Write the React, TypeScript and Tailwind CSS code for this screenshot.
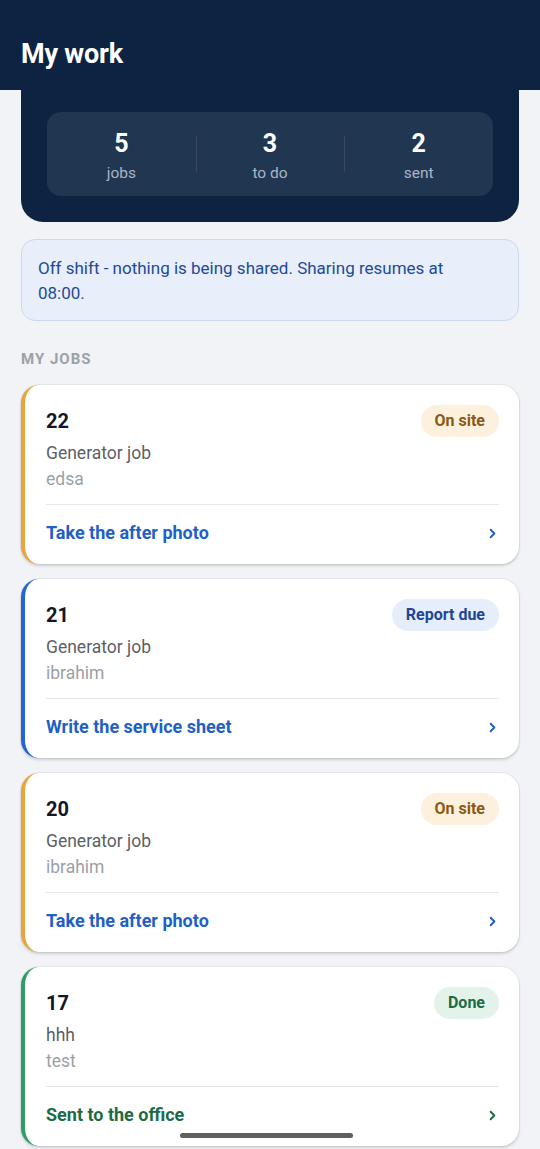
import { ChevronRight } from 'lucide-react'

type Job = {
    id: number
    title: string
    client: string
    status: string
    action: string
    tone: 'amber' | 'blue' | 'green'
}

const jobs: Job[] = [
    { id: 22, title: 'Generator job', client: 'edsa', status: 'On site', action: 'Take the after photo', tone: 'amber' },
    { id: 21, title: 'Generator job', client: 'ibrahim', status: 'Report due', action: 'Write the service sheet', tone: 'blue' },
    { id: 20, title: 'Generator job', client: 'ibrahim', status: 'On site', action: 'Take the after photo', tone: 'amber' },
    { id: 17, title: 'hhh', client: 'test', status: 'Done', action: 'Sent to the office', tone: 'green' },
]

// Colours per status tone
const tones = {
    amber: {
        strip: 'border-l-[#e9a43c]',
        badge: 'bg-[#fdf0dd] text-[#8a5a12]',
        action: 'text-[#1f5fc8]',
    },
    blue: {
        strip: 'border-l-[#2366d1]',
        badge: 'bg-[#e7eefb] text-[#1d4796]',
        action: 'text-[#1f5fc8]',
    },
    green: {
        strip: 'border-l-[#2e9d63]',
        badge: 'bg-[#e3f3ea] text-[#1c6b44]',
        action: 'text-[#1d6b45]',
    },
}

function JobCard({ job }: { job: Job }) {
    const t = tones[job.tone]
    return (
        <div className={`bg-white rounded-[18px] border-l-4 ${t.strip} shadow-[0_2px_3px_rgba(0,0,0,0.14),0_0_0_1px_rgba(0,0,0,0.05)] pl-[21px] pr-5`}>
            {/* Header row */}
            <div className="flex items-center justify-between mt-5 h-8">
                <span className="text-[20px] font-bold text-[#111827] leading-7">{job.id}</span>
                <span className={`h-8 px-3.5 rounded-full flex items-center text-[16px] font-bold ${t.badge}`}>{job.status}</span>
            </div>
            <div className="mt-[3px] text-[17.5px] leading-[26px]">
                <div className="text-[#5b5f66]">{job.title}</div>
                <div className="text-[#9ca0a6]">{job.client}</div>
            </div>
            <div className="mt-3 h-px bg-[#e6e8eb]" />
            {/* Action */}
            <div className={`flex items-center justify-between pt-4 pb-[19px] ${t.action}`}>
                <span className="text-[18px] font-bold leading-6">{job.action}</span>
                <ChevronRight className="w-[15px] h-[15px] mr-[-1px]" strokeWidth={3} />
            </div>
        </div>
    )
}

export default function App() {
    return (
        <div className="relative min-h-[1149px] bg-[#f1f3f7] font-['Roboto',sans-serif]">
            {/* Top bar */}
            <div className="h-[90px] bg-[#0e2341] px-[21px] pt-[38px]">
                <h1 className="text-[27px] font-bold text-white leading-8 tracking-[-0.2px]">My work</h1>
            </div>

            {/* Summary card */}
            <div className="mx-[21px] bg-[#0e2341] rounded-b-[22px] px-[26px] pt-[22px] pb-[26px]">
                <div className="grid grid-cols-3 bg-[#213651] rounded-[14px] h-[84px]">
                    {[
                        { n: 5, label: 'jobs' },
                        { n: 3, label: 'to do' },
                        { n: 2, label: 'sent' },
                    ].map((s, i) => (
                        <div key={i} className="relative flex flex-col items-center pt-[18px]">
                            {i > 0 && <div className="absolute left-0 top-6 h-9 w-px bg-white/10" />}
                            <span className="text-[25px] font-bold text-white leading-7">{s.n}</span>
                            <span className="mt-[5px] text-[15.5px] text-[#a9b5c6] leading-5">{s.label}</span>
                        </div>
                    ))}
                </div>
            </div>

            <div className="px-[21px]">
                {/* Shift notice */}
                <div className="mt-[17px] bg-[#e8effb] border border-[#cbd8ee] rounded-[14px] pl-4 pr-10 pt-4 pb-[14px]">
                    <p className="text-[17px] leading-[25px] text-[#1e4a98]">
                        Off shift - nothing is being shared. Sharing resumes at 08:00.
                    </p>
                </div>

                <h2 className="mt-7 text-[15px] font-bold tracking-[1px] text-[#9ca1a8] leading-5">MY JOBS</h2>

                <div className="mt-4 flex flex-col gap-[15px] pb-4">
                    {jobs.map(j => (
                        <JobCard key={j.id} job={j} />
                    ))}
                </div>
            </div>

            {/* Home indicator */}
            <div className="absolute left-[180px] top-[1133px] w-[173px] h-[5px] rounded-full bg-[#5f5f5f]" />
        </div>
    )
}
